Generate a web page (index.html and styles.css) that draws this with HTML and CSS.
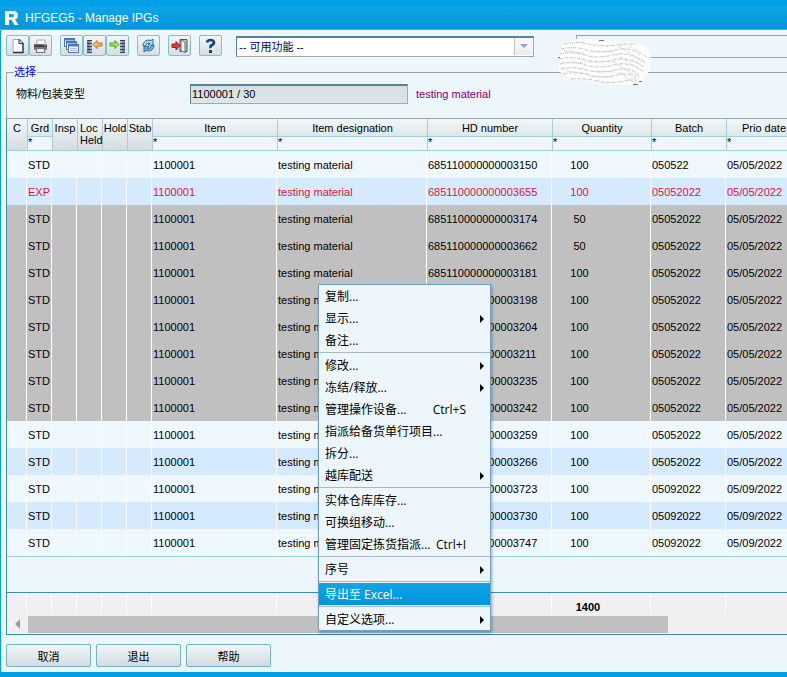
FILE: index.html
```html
<!DOCTYPE html>
<html lang="zh-CN">
<head>
    <meta charset="UTF-8">
    <meta name="viewport" content="width=device-width, initial-scale=1.0">
    <title>HFGEG5 - Manage IPGs</title>
    <link rel="stylesheet" href="styles.css">
</head>
<body>
    <div class="window">
        <header class="title-bar">
            <svg class="logo" width="14" height="14" viewBox="0 0 14 14"><path fill="#fff" fill-rule="evenodd" d="M0 0h8q5 0 5 4.500q0 3-3 4L13.500 14H9.500L6.500 9H4v5H0zM4 3v3h3.500q1.500 0 1.500-1.500T7.500 3z"/></svg>
            <h1>HFGEG5 - Manage IPGs</h1>
        </header>

        <main class="content">
            <div class="toolbar">
                <div class="tool-group">
                    <button class="tool" aria-label="New">
                        <svg width="17" height="17" viewBox="0 0 17 17"><path d="M4 2.500h6l4 4v9H4z" fill="#fff" stroke="#9aa9bd"/><path d="M10 2.500l4 4v9H4" fill="none" stroke="#1e2f5c" stroke-width="1.300"/><path d="M10 2.500v4h4" fill="#dbe4f0" stroke="#1e2f5c"/></svg>
                    </button>
                    <button class="tool" aria-label="Print">
                        <svg width="17" height="17" viewBox="0 0 17 17"><path d="M5 3h8v5H5z" fill="#fafafa" stroke="#aaa"/><rect x="2" y="7" width="13" height="6" rx="1" fill="#767676"/><path d="M2 9h13" stroke="#444" stroke-width="2"/><path d="M5 11.500h7l1 4H4z" fill="#eee" stroke="#777"/><path d="M12 8h2" stroke="#c8d8c8"/></svg>
                    </button>
                </div>
                <div class="tool-group">
                    <button class="tool" aria-label="Windows">
                        <svg width="17" height="17" viewBox="0 0 17 17"><g fill="#f4f8ff" stroke="#5077b4"><rect x="1.500" y="1.500" width="10" height="8"/><rect x="3.500" y="4.500" width="10" height="8"/><rect x="5.500" y="7.500" width="10" height="8"/></g><path d="M1 2.500h11M3 5.500h11M5 8.500h11" stroke="#4a79c0" stroke-width="2"/><path d="M7 11.500h7M7 13.500h7" stroke="#a8bad4"/></svg>
                    </button>
                    <button class="tool" aria-label="Previous">
                        <svg width="17" height="17" viewBox="0 0 17 17"><path d="M2.500 3v13" stroke="#7888a4" stroke-width="3"/><path d="M5 3v13" stroke="#a9b4c5" stroke-width="2"/><path d="M3.500 3v13" stroke="#33425f" stroke-width="5" stroke-dasharray="1 2"/><path d="M7 7.500l4-4v2.500h5v3h-5v2.500z" fill="#ffc15a" stroke="#b8751c"/></svg>
                    </button>
                    <button class="tool" aria-label="Next">
                        <svg width="17" height="17" viewBox="0 0 17 17"><path d="M14.500 3v13" stroke="#7888a4" stroke-width="3"/><path d="M12 3v13" stroke="#a9b4c5" stroke-width="2"/><path d="M13.500 3v13" stroke="#33425f" stroke-width="5" stroke-dasharray="1 2"/><path d="M10 7.500l-4-4v2.500H1v3h5v2.500z" fill="#a5e860" stroke="#4b9b28"/></svg>
                    </button>
                </div>
                <button class="tool" aria-label="Refresh">
                    <svg width="17" height="17" viewBox="0 0 17 17"><path d="M3 9q0-5 5-6l3 .5L13 2v6H8l2-2q-4-.5-4.500 3z" fill="#a9d8f2" stroke="#2f6f9e"/><path d="M14 8q0 5-5 6l-3-.5L4 15V9.500h5l-2 2q4 .5 4.500-3z" fill="#6cb4dc" stroke="#2f6f9e"/></svg>
                </button>
                <button class="tool" aria-label="Exit">
                    <svg width="17" height="17" viewBox="0 0 17 17"><path d="M9 2.500h7v12H9z" fill="#ccc" stroke="#555"/><path d="M10 3l4 2v10.500l-4-1.500z" fill="#f7f7f7" stroke="#666"/><path d="M9 8.500l-4-4V7H1v3.500h4V13z" fill="#e83636" stroke="#a81d1d"/></svg>
                </button>
                <button class="tool" aria-label="Help">
                    <svg width="17" height="17" viewBox="0 0 17 17"><path d="M5 5.500Q5.500 3 8.500 3T12 5.500Q12 7 10 8T8.700 11" fill="none" stroke="#12428c" stroke-width="2.700"/><rect x="7" y="13" width="3" height="3" fill="#12428c"/></svg>
                </button>
                <div class="function-select">
                    <select aria-label="可用功能">
                        <option>-- 可用功能 --</option>
                    </select>
                    <span class="select-arrow"></span>
                </div>
                <div class="side-box">
                    <svg class="scribble" width="94" height="48" viewBox="0 0 94 48">
                        <path d="M16 1Q30 0 46 3Q66 4 78 4Q94 8 94 23Q92 42 77 47Q52 48 28 43Q7 42 2 32Q-2 10 8 5Z" fill="#fff"/>
                        <g fill="none" stroke="#bdbdbd" stroke-dasharray="3 1 1 1">
                            <path d="M7 6q13-3 25 0t28 1 20 0M4 11q14-3 26 1t28 0 25 5M2 16q14-3 26 1t28 0 32 7M2 21q14-3 26 1t28 0 31 7M3 26q14-3 26 1t28 0 28 6M4 31q14-3 26 1t28 0 24 6M6 36q14-3 26 1t28 0 19 6M14 41q14-1 26 2t28 0 9 3"/>
                            <path d="M61 8l27 17M58 16l29 18M57 24l25 16M62 34l14 10M72 8l18 11M7 13l20 2M5 24l23 1M10 33l22 3M34 13l24 1M32 23l26 1M34 33l24 1M34 38l22 1" stroke="#d0d0d0"/>
                        </g>
                        <path d="M42 2.500h5M76 46.500h5M82 43.500h3M1 19.500h2" stroke="#777"/>
                    </svg>
                </div>
            </div>

            <fieldset class="selection">
                <legend>选择</legend>
                <div class="field">
                    <label for="material">物料/包装变型</label>
                    <input type="text" id="material" value="1100001 / 30" readonly>
                    <span class="field-note">testing material</span>
                </div>
            </fieldset>

            <div class="grid">
                <table>
                    <colgroup>
                        <col class="w-mark"><col span="5" class="w-flag"><col class="w-item"><col class="w-name"><col class="w-item"><col class="w-qty"><col span="2" class="w-date">
                    </colgroup>
                    <thead>
                        <tr>
                            <th rowspan="2">C</th>
                            <th class="top">Grd</th>
                            <th rowspan="2">Insp</th>
                            <th rowspan="2" class="left">Loc Held</th>
                            <th rowspan="2">Hold</th>
                            <th rowspan="2">Stab</th>
                            <th class="top">Item</th>
                            <th class="top">Item designation</th>
                            <th class="top">HD number</th>
                            <th class="top">Quantity</th>
                            <th class="top">Batch</th>
                            <th class="top">Prio date</th>
                        </tr>
                        <tr class="filters">
                            <td><input type="text" value="*" aria-label="Grd"></td>
                            <td><input type="text" value="*" aria-label="Item"></td>
                            <td><input type="text" value="*" aria-label="Item designation"></td>
                            <td><input type="text" value="*" aria-label="HD number"></td>
                            <td><input type="text" value="*" aria-label="Quantity"></td>
                            <td><input type="text" value="*" aria-label="Batch"></td>
                            <td><input type="text" value="*" aria-label="Prio date"></td>
                        </tr>
                    </thead>
                    <tbody>
                        <tr><td></td><td>STD</td><td></td><td></td><td></td><td></td><td>1100001</td><td>testing material</td><td>685110000000003150</td><td class="qty">100</td><td>050522</td><td>05/05/2022</td></tr>
                        <tr class="alt expired"><td></td><td>EXP</td><td></td><td></td><td></td><td></td><td>1100001</td><td>testing material</td><td>685110000000003655</td><td class="qty">100</td><td>05052022</td><td>05/05/2022</td></tr>
                        <tr class="selected"><td></td><td>STD</td><td></td><td></td><td></td><td></td><td>1100001</td><td>testing material</td><td>685110000000003174</td><td class="qty">50</td><td>05052022</td><td>05/05/2022</td></tr>
                        <tr class="selected"><td></td><td>STD</td><td></td><td></td><td></td><td></td><td>1100001</td><td>testing material</td><td>685110000000003662</td><td class="qty">50</td><td>05052022</td><td>05/05/2022</td></tr>
                        <tr class="selected"><td></td><td>STD</td><td></td><td></td><td></td><td></td><td>1100001</td><td>testing material</td><td>685110000000003181</td><td class="qty">100</td><td>05052022</td><td>05/05/2022</td></tr>
                        <tr class="selected"><td></td><td>STD</td><td></td><td></td><td></td><td></td><td>1100001</td><td>testing material</td><td>685110000000003198</td><td class="qty">100</td><td>05052022</td><td>05/05/2022</td></tr>
                        <tr class="selected"><td></td><td>STD</td><td></td><td></td><td></td><td></td><td>1100001</td><td>testing material</td><td>685110000000003204</td><td class="qty">100</td><td>05052022</td><td>05/05/2022</td></tr>
                        <tr class="selected"><td></td><td>STD</td><td></td><td></td><td></td><td></td><td>1100001</td><td>testing material</td><td>685110000000003211</td><td class="qty">100</td><td>05052022</td><td>05/05/2022</td></tr>
                        <tr class="selected"><td></td><td>STD</td><td></td><td></td><td></td><td></td><td>1100001</td><td>testing material</td><td>685110000000003235</td><td class="qty">100</td><td>05052022</td><td>05/05/2022</td></tr>
                        <tr class="selected"><td></td><td>STD</td><td></td><td></td><td></td><td></td><td>1100001</td><td>testing material</td><td>685110000000003242</td><td class="qty">100</td><td>05052022</td><td>05/05/2022</td></tr>
                        <tr><td></td><td>STD</td><td></td><td></td><td></td><td></td><td>1100001</td><td>testing material</td><td>685110000000003259</td><td class="qty">100</td><td>05052022</td><td>05/05/2022</td></tr>
                        <tr class="alt"><td></td><td>STD</td><td></td><td></td><td></td><td></td><td>1100001</td><td>testing material</td><td>685110000000003266</td><td class="qty">100</td><td>05052022</td><td>05/05/2022</td></tr>
                        <tr><td></td><td>STD</td><td></td><td></td><td></td><td></td><td>1100001</td><td>testing material</td><td>685110000000003723</td><td class="qty">100</td><td>05092022</td><td>05/09/2022</td></tr>
                        <tr class="alt"><td></td><td>STD</td><td></td><td></td><td></td><td></td><td>1100001</td><td>testing material</td><td>685110000000003730</td><td class="qty">100</td><td>05092022</td><td>05/09/2022</td></tr>
                        <tr><td></td><td>STD</td><td></td><td></td><td></td><td></td><td>1100001</td><td>testing material</td><td>685110000000003747</td><td class="qty">100</td><td>05092022</td><td>05/09/2022</td></tr>
                    </tbody>
                    <tfoot>
                        <tr class="spacer"><td colspan="12"></td></tr>
                        <tr class="totals"><td></td><td></td><td></td><td></td><td></td><td></td><td></td><td></td><td></td><td class="total">1400</td><td></td><td></td></tr>
                    </tfoot>
                </table>
                <div class="scrollbar">
                    <button class="scroll-left" aria-label="Scroll left"></button>
                    <div class="scroll-thumb"></div>
                </div>
            </div>

            <div class="actions">
                <button>取消</button>
                <button>退出</button>
                <button>帮助</button>
            </div>
        </main>

        <div class="context-menu" role="menu">
            <button role="menuitem">复制...</button>
            <button role="menuitem" class="has-sub">显示...</button>
            <button role="menuitem">备注...</button>
            <hr>
            <button role="menuitem" class="has-sub">修改...</button>
            <button role="menuitem" class="has-sub">冻结/释放...</button>
            <button role="menuitem">管理操作设备...<span>Ctrl+S</span></button>
            <button role="menuitem">指派给备货单行项目...</button>
            <button role="menuitem">拆分...</button>
            <button role="menuitem" class="has-sub">越库配送</button>
            <hr>
            <button role="menuitem">实体仓库库存...</button>
            <button role="menuitem">可换组移动...</button>
            <button role="menuitem">管理固定拣货指派...<span>Ctrl+I</span></button>
            <hr>
            <button role="menuitem" class="has-sub">序号</button>
            <hr>
            <button role="menuitem" class="active">导出至 Excel...</button>
            <hr>
            <button role="menuitem" class="has-sub">自定义选项...</button>
        </div>
    </div>
</body>
</html>
```
FILE: styles.css
```css
* {
    box-sizing: border-box;
}

body {
    margin: 0;
    background: #edf6fa;
    color: #000;
    font-family: "Liberation Sans", "Noto Sans CJK SC", sans-serif;
    font-size: 11px;
    line-height: 14px;
}

button,
input,
select {
    margin: 0;
    font: inherit;
    color: inherit;
}

.window {
    position: relative;
    display: flex;
    flex-direction: column;
    min-height: 100vh;
    overflow: hidden;
    border-bottom: 5px solid #00a0e6;
}

/* title */
.title-bar {
    display: flex;
    align-items: center;
    gap: 6px;
    height: 30px;
    padding: 0 5px;
    border-top: 6px solid #00a0e6;
    border-bottom: 1px solid #4fa8dc;
    background: linear-gradient(#10a4e8, #0096d8);
    color: #fff;
}

.title-bar h1 {
    margin: 0;
    font-size: 12px;
    font-weight: normal;
}

.content {
    flex: 1;
    padding: 5px 0 5px 5px;
    border-left: 1px solid #00a0e6;
}

/* toolbar */
.toolbar {
    display: flex;
    align-items: flex-start;
    gap: 8px;
}

.tool-group {
    display: flex;
}

.tool {
    display: flex;
    align-items: center;
    justify-content: center;
    width: 23px;
    height: 21px;
    padding: 0;
    border: 1px solid #82bfd2;
    border-radius: 2px;
    background: linear-gradient(#f0f7fa, #d5dee2);
}

.function-select {
    position: relative;
    width: 298px;
    margin: 1px 34px 0 6px;
}

.function-select select {
    display: block;
    width: 100%;
    height: 21px;
    padding: 0 22px 0 2px;
    border: 1px solid #a9a9a9;
    border-top: 2px solid #588296;
    border-left-color: #588296;
    border-radius: 0;
    background: #fff;
    color: #00006e;
    appearance: none;
}

.select-arrow {
    position: absolute;
    top: 2px;
    right: 1px;
    width: 19px;
    height: 17px;
    border-left: 1px solid #b9c0c4;
    background: linear-gradient(#fafafa, #ececec);
    pointer-events: none;
}

.select-arrow::after {
    content: "";
    position: absolute;
    top: 6px;
    left: 5px;
    border: 4px solid transparent;
    border-top-color: #88a6d0;
    border-bottom: 0;
}

.side-box {
    position: relative;
    flex: 1;
    height: 23px;
    border: 1px solid #96a5a8;
    border-right: 0;
}

.scribble {
    position: absolute;
    top: 2px;
    left: -20px;
}

/* selection */
.selection {
    min-width: 0;
    margin: 7px 0 0;
    padding: 5px 0 14px 9px;
    border: 1px solid #96a5a8;
    border-width: 1px 0 0 1px;
}

.selection legend {
    margin-left: -2px;
    padding: 0 1px 0 0;
    color: #0000f0;
}

.field {
    display: flex;
    align-items: center;
}

.field label {
    width: 174px;
}

.field input {
    width: 218px;
    height: 20px;
    padding: 0 1px 1px;
    border: 1px solid #a9a9a9;
    border-top: 2px solid #588296;
    border-left-color: #588296;
    background: linear-gradient(#d5dfe2, #dde6e9);
}

.field-note {
    margin-left: 8px;
    color: #800080;
}

/* grid */
.grid {
    overflow: hidden;
    border-top: 1px solid #96a5a8;
    border-left: 1px solid #3c8cab;
    border-bottom: 1px solid #3c8cab;
    background: #f0f0f0;
}

table {
    width: 794px;
    border-spacing: 0;
    table-layout: fixed;
}

.w-mark { width: 20px; }
.w-flag { width: 25px; }
.w-item { width: 125px; }
.w-name { width: 150px; }
.w-qty { width: 99px; }
.w-date { width: 75px; }

th {
    padding: 3px 0 0;
    border-left: 1px solid #a3cfdf;
    border-bottom: 1px solid #a3cfdf;
    background: linear-gradient(#f0f7f9, #d5dde0);
    font-weight: normal;
    line-height: 12px;
    text-align: center;
    vertical-align: top;
}

th.top {
    height: 18px;
    padding: 3px 0 2px;
    background: linear-gradient(#f0f7f9, #dfe7ea);
}

th:first-child {
    border-left: 0;
}

th.left {
    padding-left: 2px;
    text-align: left;
}

.filters td {
    height: 14px;
    padding: 0;
    border-left: 1px solid #a3cfdf;
    border-bottom: 1px solid #a3cfdf;
    background: #edf6fa;
    vertical-align: top;
}

.filters input {
    display: block;
    width: 100%;
    height: 10px;
    padding: 0;
    border: 0;
    background: none;
    line-height: 10px;
}

tbody td {
    height: 27px;
    padding: 0 0 0 1px;
    border-right: 1px solid #fff;
    background: #f0f8ff;
    white-space: nowrap;
}

tbody .alt td {
    background: #d6eaff;
}

tbody .selected td {
    background: #c0c0c0;
}

tbody .expired td {
    color: #dc143c;
}

tbody .qty {
    padding-right: 44px;
    text-align: center;
}

.spacer td {
    height: 37px;
    padding: 0;
    border-top: 1px solid #a3cfdf;
    border-bottom: 1px solid #3c8cab;
    background: #edf6fa;
}

.totals td {
    height: 21px;
    padding: 6px 0 0;
    border-right: 1px solid #fff;
    background: #f1eff0;
}

.totals .total {
    padding-right: 26px;
    font-weight: bold;
    text-align: center;
}

.scrollbar {
    display: flex;
    align-items: center;
    height: 20px;
}

.scroll-left {
    display: flex;
    justify-content: center;
    width: 21px;
    padding: 0;
    border: 0;
    background: none;
}

.scroll-left::before {
    content: "";
    border: 5px solid transparent;
    border-right-color: #9d9d9d;
    border-left: 0;
}

.scroll-thumb {
    flex: 0 1 82%;
    height: 17px;
    background: #c0c0c0;
}

/* bottom buttons */
.actions {
    display: flex;
    gap: 5px;
    margin-top: 9px;
}

.actions button {
    width: 85px;
    height: 23px;
    padding: 2px 0 0;
    border: 1px solid #73b4c9;
    border-radius: 2px;
    background: linear-gradient(#f0f7f9, #d3dbde);
}

/* context menu */
.context-menu {
    position: absolute;
    top: 284px;
    left: 318px;
    width: 173px;
    border: 1px solid #6f9fc4;
    background: #edf6fa;
    box-shadow: 1px 2px 3px rgba(0, 0, 0, 0.3);
    font-family: "Open Sans", "Noto Sans CJK SC", sans-serif;
    font-size: 12px;
}

.context-menu button {
    display: flex;
    align-items: center;
    justify-content: space-between;
    width: 100%;
    height: 22px;
    padding: 2px 24px 0 6px;
    border: 0;
    background: none;
    white-space: nowrap;
}

.context-menu .has-sub {
    padding-right: 6px;
}

.has-sub::after {
    content: "";
    border: 4px solid transparent;
    border-left-color: #000;
    border-right: 0;
}

.context-menu .active {
    background: linear-gradient(#10a4e8, #0096d8);
    color: #fff;
}

.context-menu hr {
    height: 1px;
    margin: 1px 0;
    border: 0;
    background: #a9b9cc;
}
```
